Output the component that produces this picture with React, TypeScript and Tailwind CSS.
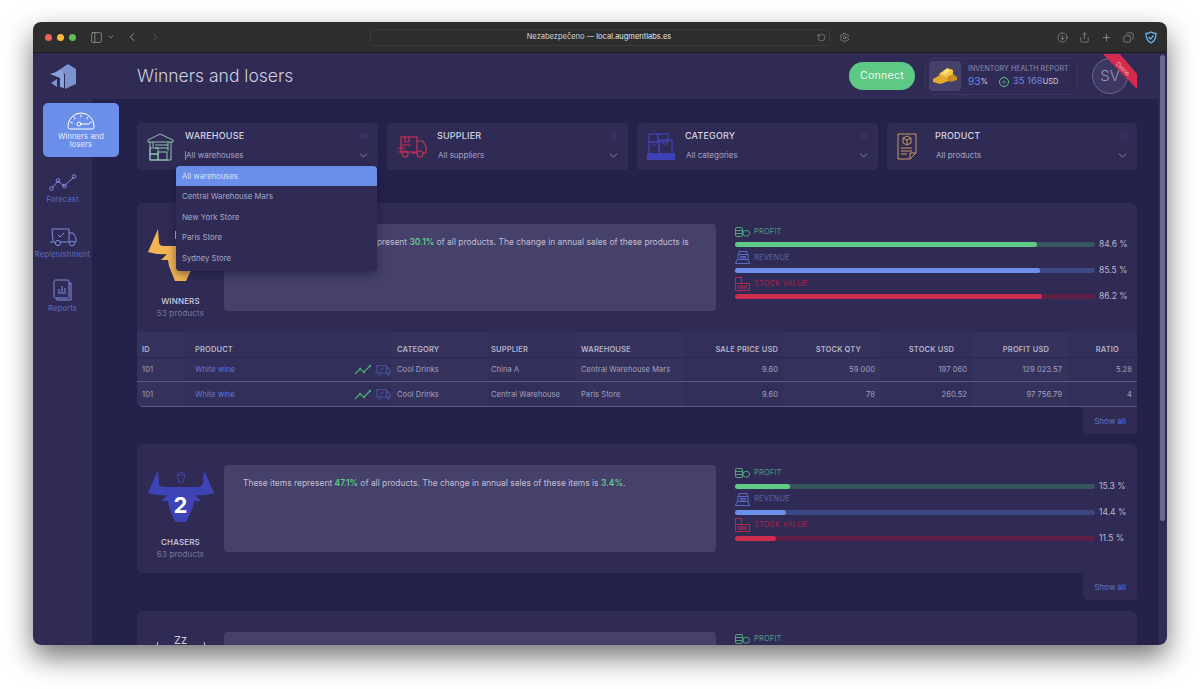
import React from "react";
import { ChevronDown, ChevronLeft, ChevronRight, RotateCw, Settings, CircleArrowDown, Share, Plus, Copy, PanelLeft } from "lucide-react";

const font = { fontFamily: '"Inter", "Noto Sans", sans-serif' };

function Logo() {
  return (
    <svg width="27" height="27" viewBox="0 0 27 27" fill="#7c93cf">
      <path d="M6 9 L18 1 L26 6 L26 21 L15 26 L15 11 Z" />
      <path d="M0 11 L12 7 L14 12 L14 25 L10 24 L10 15 Z" fill="#8ba2dc" />
      <path d="M1 20 L7 16 L7 24 Z" />
    </svg>
  );
}

function GaugeIcon() {
  return (
    <svg width="28" height="18" viewBox="0 0 28 18" fill="none" stroke="#fff" strokeWidth="1" strokeLinecap="round">
      <path d="M1 14 A13 13 0 0 1 27 14 V15 Q27 17 25 17 H3 Q1 17 1 15 Z" />
      <path d="M14 3 V5 M7 5 L8 7 M21 5 L20 7 M3.5 10 L5.5 11 M24.5 10 L22.5 11" />
      <circle cx="12" cy="12" r="2" />
      <path d="M14 12 H22" />
    </svg>
  );
}
function ForecastIcon() {
  return (
    <svg width="28" height="18" viewBox="0 0 28 18" fill="none" stroke="#7f8fdc" strokeWidth="1">
      <path d="M3 14 L9 7 L15 12 L25 3" />
      <circle cx="2.5" cy="14.5" r="1.8" /><circle cx="9" cy="6.5" r="1.8" /><circle cx="15.5" cy="12" r="1.8" /><circle cx="25" cy="2.5" r="1.8" />
    </svg>
  );
}
function TruckIcon({ color = "#7f8fdc", w = 28, h = 19 }: { color?: string; w?: number; h?: number }) {
  return (
    <svg width={w} height={h} viewBox="0 0 28 19" fill="none" stroke={color} strokeWidth="1">
      <path d="M4 13 L3 1 H20 V14 H12" />
      <path d="M20 5 H24 L27 10 V14 H25" />
      <path d="M1 14 H6 M20 14 H21" />
      <circle cx="9" cy="15" r="2.6" /><circle cx="23" cy="15.5" r="2.4" />
      <path d="M9 7 L11 9 L15 5" />
    </svg>
  );
}
function ReportIcon() {
  return (
    <svg width="20" height="22" viewBox="0 0 20 22" fill="none" stroke="#7f8fdc" strokeWidth="1">
      <rect x="1" y="1" width="15" height="18" rx="1.5" />
      <path d="M16 4 H18 V21 H4 V19" />
      <path d="M5 14 H13 M6 13 V10 M9 13 V7 M12 13 V9" />
    </svg>
  );
}
function WarehouseIcon() {
  return (
    <svg width="27" height="28" viewBox="0 0 27 28" fill="none" stroke="#8fc4ad" strokeWidth="1">
      <path d="M1 7 L13 1 L26 7 V9 H1 Z" />
      <path d="M3 9 V27 H24 V9" />
      <path d="M6 9 V14 M21 9 V18 M8 12 H21 M8 15 H21" />
      <rect x="3" y="15" width="8" height="6" /><rect x="3" y="21" width="8" height="6" /><rect x="11" y="19" width="9" height="8" />
    </svg>
  );
}
function RedTruckIcon() {
  return (
    <svg width="30" height="22" viewBox="0 0 30 22" fill="none" stroke="#c92f52" strokeWidth="1.2">
      <rect x="4" y="1" width="16" height="15" />
      <path d="M8 1 V6 H12 V1 M4 9 H14 M1 12 H8" />
      <path d="M20 5 H26 L29 11 V17 H26 M20 17 H14 M4 16 H1" />
      <circle cx="8" cy="18" r="3" /><circle cx="23" cy="18" r="3" />
    </svg>
  );
}
function BoxesIcon() {
  return (
    <svg width="28" height="27" viewBox="0 0 28 27" fill="none" stroke="#3f43b8" strokeWidth="1.2">
      <rect x="2" y="1" width="9" height="8" /><rect x="11" y="1" width="10" height="7" />
      <rect x="2" y="9" width="10" height="12" /><rect x="12" y="7" width="13" height="14" />
      <path d="M16 7 V11 H20 V7 M5 12 H9" />
      <rect x="0.5" y="21" width="27" height="2.5" fill="#3f43b8" /><rect x="0.5" y="24.5" width="27" height="2" fill="#3f43b8" />
    </svg>
  );
}
function DocIcon() {
  return (
    <svg width="20" height="27" viewBox="0 0 20 27" fill="none" stroke="#c69a5f" strokeWidth="1">
      <path d="M1 1 H19 V20 L13 26 H1 Z" />
      <path d="M19 20 H13 V26" />
      <path d="M10 3 L14 5 V10 L10 12 L6 10 V5 Z M6 5 L10 7 L14 5 M10 7 V12" />
      <path d="M4 15 H15 M4 18 H15 M4 21 H10" />
    </svg>
  );
}
function ProfitIcon() {
  return (
    <svg width="15" height="10" viewBox="0 0 15 10" fill="none" stroke="#4fa27f" strokeWidth="1">
      <rect x="0.5" y="0.5" width="7" height="9" rx="1.5" /><path d="M0.5 3.5 H7.5 M0.5 6.5 H7.5" />
      <rect x="8" y="3.5" width="6.5" height="5.5" rx="2.5" />
    </svg>
  );
}
function RevenueIcon() {
  return (
    <svg width="15" height="13" viewBox="0 0 15 13" fill="none" stroke="#5b6cc0" strokeWidth="1">
      <rect x="4" y="0.5" width="8" height="3" /><rect x="3" y="3.5" width="10" height="5" />
      <path d="M5 5.5 H11 M5 7 H11 M2 8.5 L0.5 12.5 H14.5 L13 8.5" />
    </svg>
  );
}
function StockIcon() {
  return (
    <svg width="15" height="14" viewBox="0 0 15 14" fill="none" stroke="#b8284e" strokeWidth="1">
      <rect x="0.5" y="0.5" width="6" height="6" /><rect x="0.5" y="6.5" width="14" height="7" />
      <path d="M2.5 9 H12.5 M2.5 11 H12.5" />
    </svg>
  );
}
function SparkIcon() {
  return (
    <svg width="17" height="12" viewBox="0 0 17 12" fill="#4aa873" stroke="#4aa873" strokeWidth="1.3">
      <path d="M1 10 L6 5 L10 8 L16 2" fill="none" />
      <circle cx="6" cy="5" r="0.6" /><circle cx="10" cy="8" r="0.6" /><circle cx="16" cy="2" r="0.6" />
    </svg>
  );
}
function Gold() {
  return (
    <svg width="26" height="18" viewBox="0 0 26 18">
      <path d="M7 7 L15 1 L21 3 L21 8 L12 13 Z" fill="#f2c744" />
      <path d="M1 12 L8 8 L16 11 L17 14 L8 17 L1 15 Z" fill="#e2a92c" />
      <path d="M15 10 L21 7 L25 10 L25 13 L18 15 Z" fill="#c8901f" />
      <path d="M10 6 L15 2 L18 3 L13 8 Z" fill="#fbe37f" />
    </svg>
  );
}
function Bull({ color }: { color: string }) {
  return (
    <svg width="66" height="53" viewBox="0 0 66 53" fill={color}>
      <path d="M10 0 L0 23 Q10 26 19 25 L13 31 L20 31 L21 37 L27 52 L38 52 L45 37 L46 31 L53 31 L47 25 Q56 26 66 23 L56 0 L55 13 Q54 17 50 17 L16 17 Q11 17 11 13 Z" />
    </svg>
  );
}

function SideItem({ icon, label, h }: { icon: React.ReactNode; label: string; h: string }) {
  return (
    <div className={`flex flex-col items-center w-[59px] ${h}`}>
      <div className="h-[22px] flex items-end justify-center">{icon}</div>
      <div className="mt-[3px] text-[7.5px] leading-[10px] tracking-[0.03em] text-[#6070c4] whitespace-nowrap">{label}</div>
    </div>
  );
}

function Filter({ icon, title, value, className, iconW, caret }: { icon: React.ReactNode; title: string; value: string; className: string; iconW: string; caret?: boolean }) {
  return (
    <div className={`${className} h-[47px] rounded-[4px] bg-[#2f2b55] flex items-center pl-[10px] pr-[8px]`}>
      <div className={`${iconW} shrink-0 flex justify-start`}>{icon}</div>
      <div className="flex-1 min-w-0 h-full flex flex-col">
        <div className="flex items-center justify-between mt-[7px] h-[12px]">
          <span className="text-[9px] font-medium tracking-[0.02em] text-[#d6d5e4]">{title}</span>
          <span className="w-[8px] h-[6px] mr-[2px] rounded-[1px] bg-[#35315c]"></span>
        </div>
        <div className="flex items-center justify-between mt-[7px] h-[12px]">
          <span className="flex items-center text-[8px] text-[#a5a4c0]">
            <span className={`w-[1px] h-[9px] ${caret ? "bg-[#6b8ee8]" : ""}`}></span>
            {value}
          </span>
          <ChevronDown size={13} strokeWidth={1.2} color="#b3b3cc" />
        </div>
      </div>
    </div>
  );
}

function Bar({ icon, label, labelColor, pct, fill, track }: { icon: React.ReactNode; label: string; labelColor: string; pct: number; fill: string; track: string }) {
  return (
    <div>
      <div className="h-[13px] flex items-center">
        <span className="w-[19px] shrink-0">{icon}</span>
        <span className="text-[7.5px] tracking-[0.02em] whitespace-nowrap" style={{ color: labelColor }}>{label}</span>
      </div>
      <div className="h-[13px] flex items-center">
        <div className="w-[360px] h-[5px] rounded-full" style={{ backgroundColor: track }}>
          <div className="h-full rounded-full" style={{ width: `${pct * 0.99}%`, backgroundColor: fill }}></div>
        </div>
        <span className="ml-[4px] text-[8.5px] text-[#b9b8cc] whitespace-nowrap">{pct} %</span>
      </div>
    </div>
  );
}

function Bars({ p, r, s, pt }: { p: number; r: number; s: number; pt: string }) {
  return (
    <div className={`${pt} ml-[19px]`}>
      <Bar icon={<ProfitIcon />} label="PROFIT" labelColor="#4f9a7f" pct={p} fill="#5fcb86" track="#38565f" />
      <Bar icon={<RevenueIcon />} label="REVENUE" labelColor="#5766b2" pct={r} fill="#6c90ea" track="#3d4781" />
      <Bar icon={<StockIcon />} label="STOCK VALUE" labelColor="#a9244b" pct={s} fill="#d02c4e" track="#5c2049" />
    </div>
  );
}

function Top({ badge, name, count, text, bars }: { badge: React.ReactNode; name: string; count: string; text: React.ReactNode; bars: React.ReactNode }) {
  return (
    <div className="flex h-[129px] shrink-0">
      <div className="w-[87px] shrink-0 flex flex-col items-center pt-[26px]">
        <div className="h-[65px]">{badge}</div>
        <div className="mt-[1px] text-[8px] leading-[12px] font-medium tracking-[0.02em] text-[#d0cfe0]">{name}</div>
        <div className="text-[8px] leading-[12px] tracking-[0.02em] text-[#77769a]">{count}</div>
      </div>
      <div className="mt-[21px] w-[492px] h-[87px] rounded-[4px] bg-[#45416a] pl-[19px] pr-[20px] pt-[12px] text-[8.45px] leading-[13px] text-[#c0bfd2]">{text}</div>
      {bars}
    </div>
  );
}

function ShowAll() {
  return (
    <div className="flex justify-end">
      <div className="w-[54px] h-[27px] pt-[2px] rounded-b-[5px] bg-[#2f2b55] flex items-center justify-center text-[8px] text-[#5f72cc]">Show all</div>
    </div>
  );
}

const Green = ({ children }: { children: React.ReactNode }) => <b className="font-semibold text-[#62cc88]">{children}</b>;

const headers = [
  ["ID", "text-left pl-[5px]"],
  ["PRODUCT", "text-left pl-[11px]"],
  ["CATEGORY", "text-left pl-[5px]"],
  ["SUPPLIER", "text-left pl-[4px]"],
  ["WAREHOUSE", "text-left pl-[5px]"],
  ["SALE PRICE USD", "text-right pr-[5px]"],
  ["STOCK QTY", "text-right pr-[19px]"],
  ["STOCK USD", "text-right pr-[19px]"],
  ["PROFIT USD", "text-right pr-[19px]"],
  ["RATIO", "text-right pr-[18px]"],
];
const rows = [
  ["101", "White wine", "Cool Drinks", "China A", "Central Warehouse Mars", "9.60", "59 000", "197 060", "129 023.57", "5.28"],
  ["101", "White wine", "Cool Drinks", "Central Warehouse", "Paris Store", "9.60", "78", "260.52", "97 756.79", "4"],
];
const align = ["text-left pl-[5px]", "text-left pl-[11px]", "text-left pl-[5px]", "text-left pl-[4px]", "text-left pl-[5px]", "text-right pr-[5px]", "text-right pr-[5px]", "text-right pr-[6px]", "text-right pr-[6px]", "text-right pr-[5px]"];
const colBg = ["bg-[#35325e]", "bg-[#322f5a]", "bg-[#35325e]", "bg-[#322f5a]", "bg-[#35325e]", "bg-[#322f5a]", "bg-[#35325e]", "bg-[#322f5a]", "bg-[#35325e]", "bg-[#322f5a]"];

function Table() {
  return (
    <table className="table-fixed w-[1000px] border-collapse">
      <colgroup>
        <col className="w-[47px]" /><col className="w-[208px]" /><col className="w-[95px]" /><col className="w-[89px]" /><col className="w-[107px]" />
        <col className="w-[100px]" /><col className="w-[97px]" /><col className="w-[93px]" /><col className="w-[95px]" /><col className="w-[69px]" />
      </colgroup>
      <thead>
        <tr className="h-[25px] border-b border-[#2a2750]">
          {headers.map(([h, a], i) => (
            <th key={h} className={`${a} ${colBg[i]} p-0 pt-[11px] text-[7.5px] font-semibold tracking-[0.02em] text-[#b4b3c9] whitespace-nowrap`}>{h}</th>
          ))}
        </tr>
      </thead>
      <tbody>
        {rows.map((r, ri) => (
          <tr key={ri} className={`${ri === 0 ? "h-[24px]" : "h-[25px]"} border-b border-[#5c5a84]`}>
            {r.map((c, i) => (
              <td key={i} className={`${align[i]} ${colBg[i]} p-0 pt-[2px] text-[7.5px] tracking-[0.01em] whitespace-nowrap ${i === 1 ? "text-[#6478d6]" : "text-[#a3a2bd]"}`}>
                {i === 1 ? (
                  <div className="flex items-center justify-between pr-[1px]">
                    <span>{c}</span>
                    <span className="flex items-center gap-[4px]"><SparkIcon /><TruckIcon color="#5a72c8" w={16} h={11} /></span>
                  </div>
                ) : c}
              </td>
            ))}
          </tr>
        ))}
      </tbody>
    </table>
  );
}

export default function App() {
  return (
    <div style={font} className="h-[689px] w-[1200px] overflow-hidden bg-white pt-[22px] px-[33px]">
      <div className="w-[1134px] h-[623px] rounded-[8px] overflow-hidden flex flex-col shadow-[0_12px_28px_rgba(0,0,0,0.55)]">
        {/* browser toolbar */}
        <div className="h-[31px] shrink-0 bg-[#2d2d2e] border-b border-[#1c1c22] flex items-center pl-[12px] pr-[10px] text-[#a5a5a8]">
          <span className="w-[7px] h-[7px] rounded-full bg-[#ee5f57]"></span>
          <span className="ml-[5px] w-[7px] h-[7px] rounded-full bg-[#f5bd3f]"></span>
          <span className="ml-[5px] w-[7px] h-[7px] rounded-full bg-[#5dc04f]"></span>
          <PanelLeft size={13} strokeWidth={1.3} className="ml-[14px]" />
          <ChevronDown size={8} strokeWidth={2} className="ml-[4px]" />
          <ChevronLeft size={14} strokeWidth={1.4} className="ml-[10px]" />
          <ChevronRight size={14} strokeWidth={1.4} className="ml-[9px] text-[#5c5c5e]" />
          <div className="ml-[208px] w-[460px] h-[17px] rounded-[4px] border border-[#3b3b3d] flex items-center relative">
            <div className="flex-1 pl-[10px] text-center text-[7.5px] text-[#d4d4d6]">Nezabezpečeno — <span className="text-[#e6e6e8]">local.augmentlabs.es</span></div>
            <RotateCw size={9} strokeWidth={1.4} className="mr-[3px] -scale-x-100" />
          </div>
          <Settings size={11} strokeWidth={1.2} className="ml-[9px]" />
          <div className="flex-1"></div>
          <CircleArrowDown size={11} strokeWidth={1.3} />
          <Share size={11} strokeWidth={1.3} className="ml-[11px]" />
          <Plus size={11} strokeWidth={1.5} className="ml-[11px]" />
          <Copy size={11} strokeWidth={1.3} className="ml-[11px] -scale-x-100" />
          <svg width="12" height="13" viewBox="0 0 12 13" fill="none" stroke="#6fb4ea" strokeWidth="1.3" className="ml-[11px]">
            <path d="M6 1 C8 2.2 9.5 2.5 11 2.5 C11 7 10 10 6 12 C2 10 1 7 1 2.5 C2.5 2.5 4 2.2 6 1 Z" />
            <path d="M3.5 6 L5.5 8 L8.5 4.5" />
          </svg>
        </div>
        {/* body */}
        <div className="flex-1 min-h-0 flex">
          <div className="flex-1 min-w-0 flex flex-col">
            <header className="h-[46px] shrink-0 bg-[#2f2b55] flex items-center relative z-20">
              <div className="w-[59px] pl-[17px] shrink-0 flex"><Logo /></div>
              <h1 className="ml-[45px] pt-[1px] text-[17.5px] font-light text-[#cfcfdf]">Winners and losers</h1>
              <div className="flex-1"></div>
              <button className="w-[66px] h-[28px] rounded-full bg-[#5ec985] text-[10.5px] tracking-[0.03em] text-[#eef8f1]">Connect</button>
              <div className="ml-[10px] w-[153px] h-[37px] rounded-[8px] border border-[#3a3663] flex items-center pl-[3px]">
                <div className="w-[32px] h-[30px] rounded-[4px] bg-[#45416a] flex items-center justify-center"><Gold /></div>
                <div className="ml-[7px]">
                  <div className="text-[7px] leading-[10px] tracking-[0.01em] text-[#8f8eae] whitespace-nowrap">INVENTORY HEALTH REPORT</div>
                  <div className="flex items-center h-[14px] mt-[1px] whitespace-nowrap">
                    <span className="text-[10px] text-[#6b86e4]">93</span>
                    <span className="text-[7.5px] text-[#d4d4e2]">%</span>
                    <span className="ml-[11px] w-[10px] h-[10px] rounded-full border border-[#5ec985] text-[#5ec985] flex items-center justify-center"><Plus size={6} strokeWidth={2} /></span>
                    <span className="ml-[4px] text-[9.5px] text-[#6b86e4]">35 168</span>
                    <span className="text-[7.5px] text-[#d4d4e2]">USD</span>
                  </div>
                </div>
              </div>
              <div className="relative ml-[14px] mr-[30px] w-[36px] h-[36px] rounded-full border border-[#6a6790] bg-[#3c3862] flex items-center justify-center text-[15px] font-light text-[#9a99b6]">
                SV
                <div className="absolute -top-[5px] -right-[10px] w-[34px] h-[35px] bg-[#d42b4f] [clip-path:polygon(0_0,50%_0,100%_57%,100%_100%)] flex items-center justify-center">
                  <span className="rotate-45 text-[6px] text-[#f3d5dc] translate-x-[3px] -translate-y-[3px]">Demo</span>
                </div>
              </div>
            </header>
            <div className="flex-1 min-h-0 flex">
              <aside className="w-[59px] shrink-0 bg-[#2f2b55] relative z-10">
                <div className="ml-[10px] mt-[4px] w-[76px] h-[54px] rounded-[5px] bg-[#6b8ee8] flex flex-col items-center pt-[9px]">
                  <GaugeIcon />
                  <div className="mt-[3px] text-center text-[7.5px] leading-[8px] tracking-[0.02em] text-[#e9eefb]">Winners and<br />losers</div>
                </div>
                <div className="mt-[13px]"><SideItem h="h-[55px]" icon={<ForecastIcon />} label="Forecast" /></div>
                <SideItem h="h-[54px]" icon={<TruckIcon />} label="Replenishment" />
                <SideItem h="h-[54px]" icon={<ReportIcon />} label="Reports" />
              </aside>
              <main className="flex-1 min-w-0 bg-[#24214b] pl-[45px] pr-[21px] pt-[24px] overflow-hidden">
                <div className="relative flex gap-[9px] h-[47px]">
                  <Filter className="w-[241px]" iconW="w-[38px]" icon={<WarehouseIcon />} title="WAREHOUSE" value="All warehouses" caret />
                  <Filter className="w-[241px]" iconW="w-[40px]" icon={<RedTruckIcon />} title="SUPPLIER" value="All suppliers" />
                  <Filter className="w-[241px]" iconW="w-[38px]" icon={<BoxesIcon />} title="CATEGORY" value="All categories" />
                  <Filter className="flex-1" iconW="w-[38px]" icon={<DocIcon />} title="PRODUCT" value="All products" />
                  <div className="absolute left-[39px] top-[43px] w-[201px] h-[105px] z-30 rounded-[4px] bg-[#2f2b55] shadow-[0_3px_8px_rgba(20,18,50,0.5)] text-[7.8px] text-[#a8a7c4] overflow-hidden">
                    <div className="h-[20px] pl-[6px] pt-[1px] flex items-center bg-[#6b8ee8] text-[#d6e0f8]">All warehouses</div>
                    <div className="h-[20.7px] pl-[6px] flex items-center">Central Warehouse Mars</div>
                    <div className="h-[20.7px] pl-[6px] pt-[1px] flex items-center">New York Store</div>
                    <div className="h-[20.7px] pl-[6px] pt-[1px] flex items-center">Paris Store</div>
                    <div className="h-[20.7px] pl-[6px] flex items-center">Sydney Store</div>
                  </div>
                </div>
                <section className="mt-[33px]">
                  <div className="rounded-t-[6px] rounded-bl-[6px] bg-[#2f2b55] overflow-hidden">
                    <Top
                      badge={<div className="relative"><Bull color="#f2b552" /><span className="absolute left-[27px] top-[2px] w-[2px] h-[8px] bg-[#f2b552]"></span></div>}
                      name="WINNERS"
                      count="53 products"
                      text={<>These highest-selling products represent <Green>30.1%</Green> of all products. The change in annual sales of these products is<br /><Green>3.4%</Green>.</>}
                      bars={<Bars pt="pt-[22px]" p={84.6} r={85.5} s={86.2} />}
                    />
                    <Table />
                  </div>
                  <ShowAll />
                </section>
                <section className="mt-[10px]">
                  <div className="rounded-t-[6px] rounded-bl-[6px] bg-[#2f2b55]">
                    <Top
                      badge={
                        <div className="relative">
                          <Bull color="#3e44b6" />
                          <span className="absolute inset-x-0 top-[22px] text-center text-[22px] leading-[26px] font-bold text-white">2</span>
                          <svg width="10" height="12" viewBox="0 0 10 12" fill="none" stroke="#3e44b6" className="absolute left-[28px] top-[1px]"><path d="M5 1 L9 4 L7 11 H3 L1 4 Z M1 4 H9" /></svg>
                        </div>
                      }
                      name="CHASERS"
                      count="63 products"
                      text={<>These items represent <Green>47.1%</Green> of all products. The change in annual sales of these items is <Green>3.4%</Green>.</>}
                      bars={<Bars pt="pt-[23px]" p={15.3} r={14.4} s={11.5} />}
                    />
                  </div>
                  <ShowAll />
                </section>
                <section className="mt-[11px]">
                  <div className="rounded-t-[6px] bg-[#2f2b55] h-[60px] flex">
                    <div className="w-[87px] shrink-0 flex justify-center pt-[24px]">
                      <div className="relative w-[66px] text-center text-[#cfcfdf]">
                        <span className="absolute left-[9px] top-[7px] w-[1px] h-[3px] bg-[#cfcfdf] rotate-12"></span>
                        <span className="block text-[11px] leading-[10px]">Zz</span>
                        <span className="absolute right-[9px] top-[7px] w-[1px] h-[3px] bg-[#cfcfdf] -rotate-12"></span>
                      </div>
                    </div>
                    <div className="mt-[21px] w-[492px] h-[39px] rounded-t-[4px] bg-[#45416a]"></div>
                    <div className="ml-[19px] pt-[23px] h-[13px] flex items-start">
                      <span className="w-[19px] shrink-0"><ProfitIcon /></span>
                      <span className="text-[7.5px] leading-[10px] tracking-[0.02em] text-[#4f9a7f]">PROFIT</span>
                    </div>
                  </div>
                </section>
              </main>
            </div>
          </div>
          {/* scrollbar */}
          <div className="w-[9px] shrink-0 bg-[#2f2b55] pt-[2px] pl-[2px]">
            <div className="w-[5px] h-[466px] rounded-full bg-[#6b6a8e]"></div>
          </div>
        </div>
      </div>
    </div>
  );
}
